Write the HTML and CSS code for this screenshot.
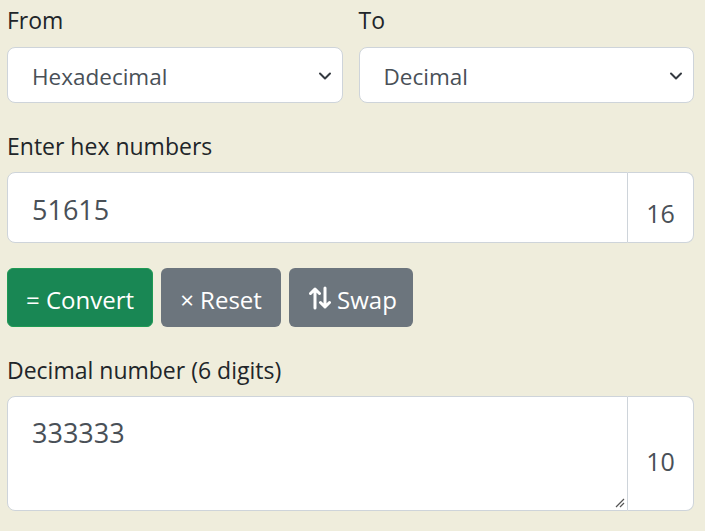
FILE: index.html
```html
<!DOCTYPE html>
<html>
<head>
<meta charset="utf-8">
<link rel="stylesheet" href="styles.css">
</head>
<body>
<div class="page">
  <div class="row2">
    <div class="field">
      <label class="lbl">From</label>
      <div class="select"><span>Hexadecimal</span>
        <svg class="caret" width="14" height="10" viewBox="0 0 14 10"><path d="M2 2.5l5 5 5-5" fill="none" stroke="#343a40" stroke-width="2" stroke-linecap="round" stroke-linejoin="round"/></svg>
      </div>
    </div>
    <div class="field">
      <label class="lbl">To</label>
      <div class="select"><span>Decimal</span>
        <svg class="caret" width="14" height="10" viewBox="0 0 14 10"><path d="M2 2.5l5 5 5-5" fill="none" stroke="#343a40" stroke-width="2" stroke-linecap="round" stroke-linejoin="round"/></svg>
      </div>
    </div>
  </div>

  <label class="lbl sec">Enter hex numbers</label>
  <div class="group">
    <div class="input one">51615</div>
    <div class="addon">16</div>
  </div>

  <div class="buttons">
    <button class="btn green">= Convert</button>
    <button class="btn gray">× Reset</button>
    <button class="btn gray swap"><svg class="swapicon" width="22" height="24" viewBox="0 0 22 24"><path d="M6 22V3M1.5 7.5L6 3l4.5 4.5M16 2v19M11.5 16.5L16 21l4.5-4.5" fill="none" stroke="#fff" stroke-width="3" stroke-linecap="round" stroke-linejoin="round"/></svg>Swap</button>
  </div>

  <label class="lbl sec">Decimal number (6 digits)</label>
  <div class="group tall">
    <div class="input area">333333
      <svg class="grip" width="12" height="12" viewBox="0 0 12 12"><path d="M11 3L3 11M11 7L7 11" stroke="#555" stroke-width="1.2"/></svg>
    </div>
    <div class="addon">10</div>
  </div>
</div>
</body>
</html>
```
FILE: styles.css
```css
* { box-sizing: border-box; }
html, body { margin: 0; background: #efeddc; }
body {
  font-family: "Open Sans", "Noto Sans", sans-serif;
  font-size: 23px;
  color: #212529;
}
.page { padding: 4px 11px 0 7px; }
.row2 { display: grid; grid-template-columns: 1fr 1fr; gap: 16px; }
.lbl { display: block; line-height: 33px; margin-bottom: 10px; }
.sec { margin-top: 27px; margin-bottom: 9px; }
.select {
  position: relative;
  height: 56px;
  background: #fff;
  border: 1px solid #ced4da;
  border-radius: 8px;
  display: flex;
  align-items: center;
  padding: 2px 0 0 24px;
  color: #495057;
  font-size: 22.5px;
}
.caret { position: absolute; right: 10px; top: 23px; }
.group { display: flex; height: 71px; }
.input {
  flex: 1;
  background: #fff;
  border: 1px solid #ced4da;
  border-radius: 8px 0 0 8px;
  padding: 3px 0 0 24px;
  color: #495057;
  display: flex;
  align-items: center;
  font-size: 27px;
}
.addon {
  width: 66px;
  background: #fff;
  border: 1px solid #ced4da;
  border-left: none;
  border-radius: 0 8px 8px 0;
  color: #495057;
  display: flex;
  align-items: flex-end;
  justify-content: center;
  padding-bottom: 12px;
  font-size: 25px;
}
.tall { height: 115px; }
.area { position: relative; align-items: flex-start; padding-top: 17px; }
.grip { position: absolute; right: 2px; bottom: 2px; }
.tall .addon { padding-bottom: 32px; }
.buttons { display: flex; gap: 8px; margin-top: 25px; }
.btn {
  font: inherit;
  font-size: 24px;
  color: #fff;
  border: 1px solid transparent;
  border-radius: 6px;
  height: 59px;
  padding: 4px 0 0;
  display: flex;
  align-items: center;
  justify-content: center;
  gap: 6px;
}
.green { background: #198754; border-color: #1f9a54; width: 146px; }
.gray { background: #6c757d; }
.gray:nth-child(2) { width: 120px; }
.gray:nth-child(3) { width: 124px; padding-left: 4px; }
.swapicon { margin-top: -3px; }
```
